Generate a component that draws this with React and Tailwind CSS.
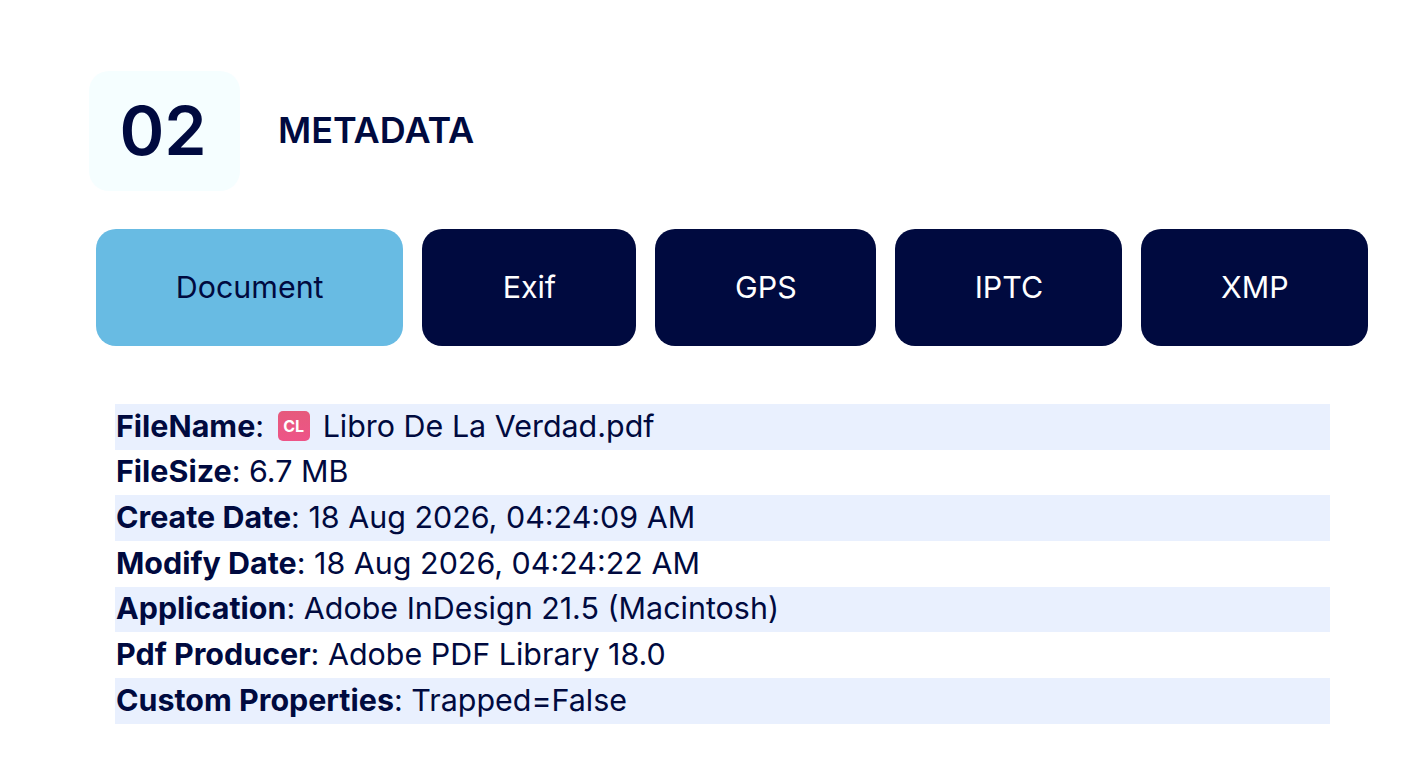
const tabs = [
  { label: "Document", w: "w-[307.4px]", active: true },
  { label: "Exif", w: "w-[214px]" },
  { label: "GPS", w: "w-[221px]" },
  { label: "IPTC", w: "w-[227px]" },
  { label: "XMP", w: "w-[227px]" },
];
const rows = [
  ["FileName", "Libro De La Verdad.pdf", true],
  ["FileSize", "6.7 MB"],
  ["Create Date", "18 Aug 2026, 04:24:09 AM"],
  ["Modify Date", "18 Aug 2026, 04:24:22 AM"],
  ["Application", "Adobe InDesign 21.5 (Macintosh)"],
  ["Pdf Producer", "Adobe PDF Library 18.0"],
  ["Custom Properties", "Trapped=False"],
];
export default function App() {
  return (
    <div className="min-h-[762px] bg-white text-[#000a3f] font-['Inter',sans-serif] pt-[71px] pl-[89px]">
      <div className="flex items-center gap-[38px]">
        <div className="w-[151px] h-[120px] rounded-[20px] bg-[#f5feff] flex items-center justify-center text-[68px] font-semibold leading-none pb-[2px] pr-[3px]">02</div>
        <div className="text-[36px] font-semibold leading-none pb-[2px]">METADATA</div>
      </div>
      <div className="flex gap-[19px] mt-[38.4px] ml-[7px]">
        {tabs.map((t) => (
          <div key={t.label} className={`${t.w} h-[116.6px] rounded-[20px] flex items-center justify-center text-[30.4px] ${t.active ? "bg-[#68bbe3] text-[#000a3f]" : "bg-[#000a3f] text-white"}`}>
            {t.label}
          </div>
        ))}
      </div>
      <div className="mt-[58px] ml-[26px] w-[1215px] text-[30.45px]">
        {rows.map(([k, v, icon], i) => (
          <div key={k} className={`h-[45.7px] leading-[45.7px] pl-px pb-[0.5px] whitespace-nowrap flex items-center ${i % 2 === 0 ? "bg-[#e9f0fe]" : "bg-white"}`}>
            <span className="font-bold">{k}</span>
            <span>:&nbsp;</span>
            {icon && (
              <span className="inline-flex w-[32px] h-[30px] ml-[5px] mr-[13px] mb-[2px] rounded-[5px] bg-gradient-to-b from-[#e65a7c] to-[#ee5488] text-white text-[16px] font-bold items-center justify-center leading-none">CL</span>
            )}
            <span>{v}</span>
          </div>
        ))}
      </div>
    </div>
  );
}
